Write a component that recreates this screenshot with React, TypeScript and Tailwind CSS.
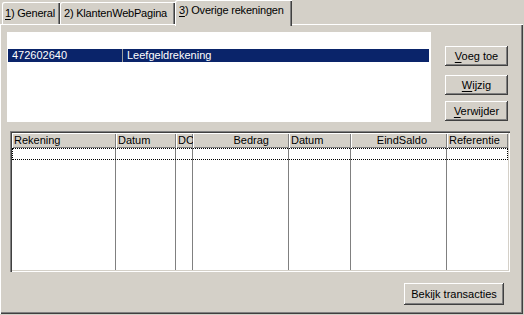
import React from 'react';

const btn =
  'flex items-center justify-center bg-[#d4d0c8] text-black shadow-[inset_-1px_-1px_#404040,inset_1px_1px_#ffffff,inset_-2px_-2px_#808080,inset_2px_2px_#d4d0c8]';

const Mn: React.FC<{ k: string; rest: string }> = ({ k, rest }) => (
  <span>
    <span className="underline underline-offset-[2px]">{k}</span>
    {rest}
  </span>
);

const columns = [
  { label: 'Rekening', w: 'w-[104px]', right: false },
  { label: 'Datum', w: 'w-[60px]', right: false },
  { label: 'DC', w: 'w-[17px]', right: false },
  { label: 'Bedrag', w: 'w-[96px]', right: true },
  { label: 'Datum', w: 'w-[62px]', right: false },
  { label: 'EindSaldo', w: 'w-[96px]', right: true },
  { label: 'Referentie', w: 'w-[61px]', right: false },
];

export default function App() {
  return (
    <div
      className="w-[524px] h-[315px] bg-[#d4d0c8] text-[11px] leading-[13px] text-black overflow-hidden"
      style={{ fontFamily: '"Liberation Sans", Arial, sans-serif' }}
    >
      {/* tab strip */}
      <div className="h-[24px] flex items-start pl-[2px]">
        <div className="mt-[2px] w-[58px] h-[22px] pl-[3px] pt-[5px] whitespace-nowrap tracking-[-0.2px] rounded-tl-[2px] shadow-[inset_1px_1px_#ffffff,inset_-1px_0_#404040,inset_-2px_0_#808080]">
          <Mn k="1" rest=") General" />
        </div>
        <div className="mt-[2px] w-[115px] h-[22px] pl-[4px] pt-[5px] whitespace-nowrap tracking-[-0.2px] rounded-tl-[2px] shadow-[inset_1px_1px_#ffffff,inset_-1px_0_#404040,inset_-2px_0_#808080]">
          2) KlantenWebPagina
        </div>
        <div className="relative z-10 w-[117px] h-[26px] pl-[4px] pt-[4px] whitespace-nowrap tracking-[-0.2px] bg-[#d4d0c8] rounded-tl-[2px] shadow-[inset_1px_1px_#ffffff,inset_-1px_0_#404040,inset_-2px_0_#808080]">
          <Mn k="3" rest=") Overige rekeningen" />
        </div>
      </div>

      {/* tab page */}
      <div className="w-[523px] h-[290px] flex flex-col shadow-[inset_1px_1px_#ffffff,inset_-1px_-1px_#404040,inset_-2px_-2px_#808080]">
        <div className="flex mt-[8px] ml-[7px]">
          <div className="w-[424px] h-[90px] bg-white pt-[17px] pl-[1px]">
            <div className="w-[421px] h-[13px] bg-[#0a246a] text-white flex">
              <div className="w-[115px] pl-[4px] border-r border-[#a0a0a0]">472602640</div>
              <div className="pl-[4px]">Leefgeldrekening</div>
            </div>
          </div>
          <div className="ml-[14px] pt-[14px] flex flex-col">
            <button className={`${btn} w-[63px] h-[20px]`}>
              <Mn k="V" rest="oeg toe" />
            </button>
            <button className={`${btn} w-[63px] h-[20px] mt-[9px]`}>
              <Mn k="W" rest="ijzig" />
            </button>
            <button className={`${btn} w-[63px] h-[20px] mt-[6px]`}>
              <Mn k="V" rest="erwijder" />
            </button>
          </div>
        </div>

        {/* transactions grid */}
        <div className="ml-[10px] mt-[9px] w-[500px] h-[141px] bg-white p-[2px] flex flex-col shadow-[inset_1px_1px_#808080,inset_2px_2px_#404040,inset_-1px_-1px_#ffffff,inset_-2px_-2px_#d4d0c8]">
          <div className="flex h-[15px] shrink-0">
            {columns.map((c, i) => (
              <div
                key={i}
                className={`${c.w} shrink-0 overflow-hidden whitespace-nowrap bg-[#d4d0c8] pt-[1px] shadow-[inset_1px_1px_#ffffff,inset_-1px_-1px_#808080] ${
                  c.right ? 'text-right pr-[20px]' : 'pl-[2px]'
                }`}
              >
                {c.label}
              </div>
            ))}
          </div>
          <div className="relative flex flex-1">
            {columns.map((c, i) => (
              <div key={i} className={`${c.w} shrink-0 ${i < columns.length - 1 ? 'border-r border-[#808080]' : ''}`} />
            ))}
            <div className="absolute left-0 right-0 top-0 h-[12px] border border-dotted border-black" />
          </div>
        </div>

        <div className="mt-[11px] ml-[404px]">
          <button className={`${btn} w-[100px] h-[22px]`}>Bekijk transacties</button>
        </div>
      </div>
    </div>
  );
}
